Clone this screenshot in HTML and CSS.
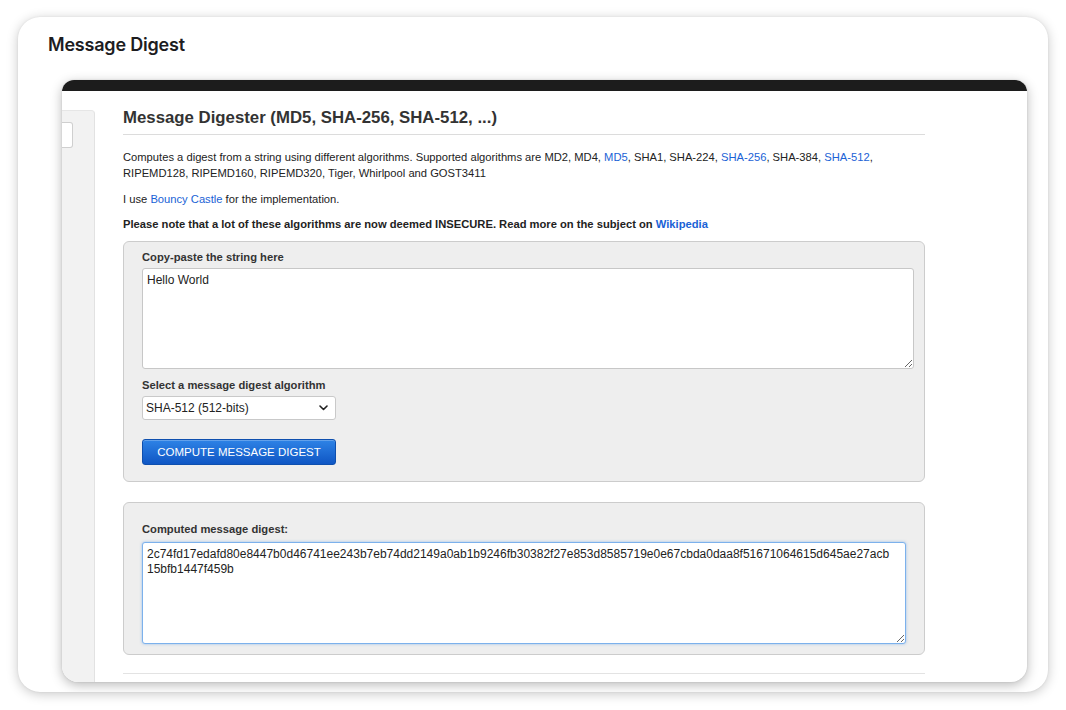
FILE: index.html
```html
<!DOCTYPE html>
<html lang="en">
<head>
<meta charset="utf-8">
<title>Message Digest</title>
<link rel="stylesheet" href="styles.css">
</head>
<body>
<div class="card">
  <h2 class="card-title">Message Digest</h2>
  <div class="window">
    <div class="window-bar"></div>
    <div class="window-body">
      <aside class="sidebar"><div class="side-input"></div></aside>
      <main class="main">
        <h1 class="heading">Message Digester (MD5, SHA-256, SHA-512, ...)</h1>
        <p class="text">Computes a digest from a string using different algorithms. Supported algorithms are MD2, MD4, <a href="#">MD5</a>, SHA1, SHA-224, <a href="#">SHA-256</a>, SHA-384, <a href="#">SHA-512</a>, RIPEMD128, RIPEMD160, RIPEMD320, Tiger, Whirlpool and GOST3411</p>
        <p class="text">I use <a href="#">Bouncy Castle</a> for the implementation.</p>
        <p class="text strong">Please note that a lot of these algorithms are now deemed INSECURE. Read more on the subject on <a href="#">Wikipedia</a></p>
        <form class="panel panel-input">
          <label class="label">Copy-paste the string here</label>
          <textarea class="area area-input">Hello World</textarea>
          <label class="label label-select">Select a message digest algorithm</label>
          <div class="select-wrap">
            <select class="select">
              <option>SHA-512 (512-bits)</option>
            </select>
            <svg class="chevron" width="9" height="6" viewBox="0 0 9 6"><path d="M1 1 L4.5 4.5 L8 1" fill="none" stroke="#222" stroke-width="1.6" stroke-linecap="round" stroke-linejoin="round"/></svg>
          </div>
          <button type="button" class="btn">COMPUTE MESSAGE DIGEST</button>
        </form>
        <div class="panel panel-output">
          <label class="label">Computed message digest:</label>
          <textarea class="area area-output">2c74fd17edafd80e8447b0d46741ee243b7eb74dd2149a0ab1b9246fb30382f27e853d8585719e0e67cbda0daa8f51671064615d645ae27acb
15bfb1447f459b</textarea>
        </div>
        <div class="rule"></div>
      </main>
    </div>
  </div>
</div>
</body>
</html>
```

FILE: styles.css
```css
html, body {
  margin: 0;
  padding: 0;
  background: #ffffff;
}
body {
  width: 1066px;
  height: 710px;
  overflow: hidden;
  padding-top: 17px;
  box-sizing: border-box;
}
.card {
  margin-left: 18px;
  width: 1030px;
  height: 675px;
  box-sizing: border-box;
  background: #fff;
  border-radius: 22px;
  box-shadow: 0 2px 12px rgba(0, 0, 0, 0.22), 0 0 2px rgba(0, 0, 0, 0.08);
  padding: 16px 0 0 30px;
  overflow: hidden;
}
.card-title {
  margin: 0;
  font-family: Inter, "Noto Sans", sans-serif;
  font-weight: 600;
  font-size: 18px;
  line-height: 24px;
  color: #1d1d1f;
  letter-spacing: -0.2px;
}
.window {
  margin-top: 23px;
  margin-left: 14px;
  width: 965px;
  height: 602px;
  background: #fff;
  border-radius: 12px 12px 16px 16px;
  box-shadow: 0 3px 12px rgba(0, 0, 0, 0.28), 0 0 2px rgba(0, 0, 0, 0.12);
  overflow: hidden;
  display: flex;
  flex-direction: column;
}
.window-bar {
  height: 11px;
  background: #1c1c1c;
  flex: none;
}
.window-body {
  flex: 1;
  display: flex;
  font-family: "Liberation Sans", Arial, Helvetica, sans-serif;
  color: #222;
}
.sidebar {
  width: 32px;
  margin-top: 19px;
  background: #f2f2f2;
  border-right: 1px solid #e2e2e2;
  border-top: 1px solid #e6e6e6;
  border-top-right-radius: 4px;
  flex: none;
}
.side-input {
  margin-top: 11px;
  width: 10px;
  height: 24px;
  background: #fff;
  border: 1px solid #cfcfcf;
  border-left: none;
  border-radius: 0 3px 3px 0;
}
.main {
  margin-left: 28px;
  width: 802px;
  padding-top: 17px;
}
.heading {
  margin: 0;
  font-size: 16.8px;
  line-height: 20px;
  font-weight: bold;
  color: #333;
  padding-bottom: 6px;
  border-bottom: 1px solid #dcdcdc;
}
.text {
  margin: 0 0 10px;
  font-size: 11.2px;
  line-height: 16px;
  color: #222;
}
.heading + .text {
  margin-top: 14px;
}
.strong {
  font-weight: bold;
  color: #222;
  margin-top: -1px;
  margin-bottom: 9px;
}
.text a {
  color: #1a62d6;
  text-decoration: none;
}
.panel {
  display: flex;
  flex-direction: column;
  align-items: flex-start;
  background: #eeeeee;
  border: 1px solid #cccccc;
  border-radius: 6px;
  box-sizing: border-box;
  margin: 0;
}
.panel-input {
  margin-top: 0;
  height: 241px;
  padding: 8px 10px 0 18px;
}
.panel-output {
  margin-top: 20px;
  height: 153px;
  padding: 19px 18px 0 18px;
}
.label {
  font-size: 11.2px;
  line-height: 14px;
  font-weight: bold;
  color: #333;
}
.area {
  margin-top: 4px;
  font-family: "Liberation Sans", Arial, Helvetica, sans-serif;
  font-size: 12px;
  line-height: 15px;
  color: #222;
  background: #fff;
  box-sizing: border-box;
  padding: 4px 4px;
  border-radius: 3px;
  resize: vertical;
}
.area-input {
  width: 772px;
  height: 101px;
  border: 1px solid #c7c7c7;
}
.area-output {
  margin-top: 6px;
  width: 764px;
  height: 102px;
  border: 1px solid #7cb1ec;
  box-shadow: 0 0 3px rgba(80, 150, 230, 0.55);
  outline: none;
}
.label-select {
  margin-top: 9px;
}
.select-wrap {
  position: relative;
  margin-top: 4px;
  width: 194px;
  height: 24px;
}
.select {
  appearance: none;
  -webkit-appearance: none;
  width: 194px;
  height: 24px;
  box-sizing: border-box;
  border: 1px solid #c9c9c9;
  border-radius: 3px;
  background: #fff;
  font-family: "Liberation Sans", Arial, Helvetica, sans-serif;
  font-size: 12px;
  color: #222;
  padding: 0 0 0 3px;
}
.chevron {
  position: absolute;
  right: 8px;
  top: 9px;
  pointer-events: none;
}
.btn {
  margin-top: 19px;
  width: 194px;
  height: 26px;
  border: 1px solid #0e4fae;
  border-radius: 3px;
  background: linear-gradient(#2e83e6, #0f56c4);
  color: #fff;
  font-family: "Liberation Sans", Arial, Helvetica, sans-serif;
  font-size: 11.5px;
  padding: 0;
  box-shadow: inset 0 1px 0 rgba(255, 255, 255, 0.25);
}
.rule {
  margin-top: 18px;
  height: 1px;
  background: #e3e3e3;
}
```
